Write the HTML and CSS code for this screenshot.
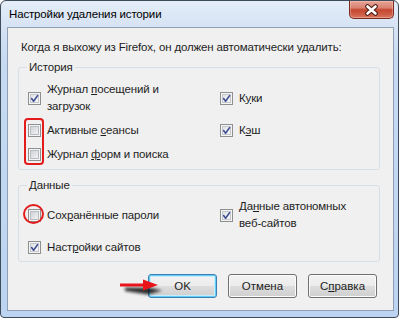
FILE: index.html
```html
<!DOCTYPE html>
<html lang="ru">
<head>
<meta charset="utf-8">
<title>Настройки удаления истории</title>
<link rel="stylesheet" href="styles.css">
</head>
<body>
<div class="window">
  <div class="titlebar">
    <span class="title">Настройки удаления истории</span>
    <button class="close" type="button" aria-label="Закрыть">
      <svg width="15" height="12" viewBox="0 0 15 12"><path d="M3.5 2.5 L11.5 9.5 M11.5 2.5 L3.5 9.5" stroke="#4a1a12" stroke-width="4.6" stroke-linecap="round"/><path d="M3.5 2.5 L11.5 9.5 M11.5 2.5 L3.5 9.5" stroke="#fff" stroke-width="2.6" stroke-linecap="round"/></svg>
    </button>
  </div>
  <div class="client">
    <p class="intro">Когда я выхожу из Firefox, он должен автоматически удалить:</p>

    <fieldset class="group g1">
      <legend>История</legend>
      <div class="grid">
        <label class="opt"><span class="cb on"><svg viewBox="0 0 11 11"><path d="M2.6 5.6 L4.6 8.2 L8.6 2.6"/></svg></span><span>Журнал <u>п</u>осещений и<br>загрузок</span></label>
        <label class="opt"><span class="cb on"><svg viewBox="0 0 11 11"><path d="M2.6 5.6 L4.6 8.2 L8.6 2.6"/></svg></span><span>К<u>у</u>ки</span></label>
        <label class="opt"><span class="cb"></span><span>Активные <u>с</u>еансы</span></label>
        <label class="opt"><span class="cb on"><svg viewBox="0 0 11 11"><path d="M2.6 5.6 L4.6 8.2 L8.6 2.6"/></svg></span><span>К<u>э</u>ш</span></label>
        <label class="opt"><span class="cb"></span><span>Журнал <u>ф</u>орм и поиска</span></label>
      </div>
    </fieldset>

    <fieldset class="group g2">
      <legend>Данные</legend>
      <div class="grid">
        <label class="opt"><span class="cb"></span><span>Сох<u>р</u>анённые пароли</span></label>
        <label class="opt"><span class="cb on"><svg viewBox="0 0 11 11"><path d="M2.6 5.6 L4.6 8.2 L8.6 2.6"/></svg></span><span>Да<u>н</u>ные автономных<br>веб-сайтов</span></label>
        <label class="opt"><span class="cb on"><svg viewBox="0 0 11 11"><path d="M2.6 5.6 L4.6 8.2 L8.6 2.6"/></svg></span><span>Наст<u>р</u>ойки сайтов</span></label>
      </div>
    </fieldset>

    <div class="buttons">
      <button class="btn default" type="button">OK</button>
      <button class="btn" type="button">Отмена</button>
      <button class="btn" type="button">С<u>п</u>равка</button>
    </div>

    <div class="mark-rect"></div>
    <div class="mark-circle"></div>
    <svg class="arrow" width="50" height="22" viewBox="0 0 50 22">
      <defs><filter id="blur" x="-20%" y="-50%" width="140%" height="200%"><feGaussianBlur stdDeviation="1.6"/></filter></defs>
      <path d="M7 12.5 L30 12.5 L44 15.5 L30 19.5 L7 16 Z" fill="#111" opacity="0.85" filter="url(#blur)"/>
      <rect x="2" y="8.5" width="25" height="3" fill="#e8141a"/>
      <path d="M25 4.5 L40 10 L25 15.5 Z" fill="#e8141a"/>
    </svg>
  </div>
</div>
</body>
</html>
```
FILE: styles.css
```css
html, body {
  margin: 0;
  padding: 0;
  background: #ffffff;
}

body {
  font-family: "Liberation Sans", Arial, sans-serif;
  font-size: 11.5px;
  letter-spacing: -0.15px;
  color: #1e1e1e;
}

.window {
  width: 399px;
  height: 318px;
  box-sizing: border-box;
  border: 1px solid #3d4b5a;
  border-radius: 6px 6px 4px 4px;
  background: linear-gradient(to bottom, #e4edf7 0, #d6e3f4 26px, #c6daf2 60px, #bcd4f1 100%);
  padding: 0 4px 6px 6px;
  display: flex;
  flex-direction: column;
}

.titlebar {
  height: 26px;
  flex: none;
  display: flex;
  justify-content: space-between;
  align-items: center;
}

.title {
  margin-left: 2px;
  line-height: 15px;
  color: #000;
}

.close {
  align-self: flex-start;
  width: 45px;
  height: 18px;
  margin: 0;
  padding: 0;
  border: 1px solid #7a2a1f;
  border-top: none;
  border-radius: 0 0 5px 5px;
  background: linear-gradient(to bottom, #e6a597 0, #d98271 40%, #c5462f 52%, #cf5e46 80%, #db7a62 100%);
  box-shadow: inset 0 0 0 1px rgba(255, 220, 210, 0.35);
  display: flex;
  align-items: center;
  justify-content: center;
}

.close svg {
  display: block;
}

.client {
  flex: 1;
  position: relative;
  border: 1px solid #8fa0b4;
  background: #f0f0f0;
  padding: 12px 13px 0 10px;
  display: flex;
  flex-direction: column;
}

.intro {
  margin: 0 0 5px 3px;
  line-height: 15px;
  white-space: nowrap;
}

.group {
  margin: 0;
  border: 1px solid #d5dfe5;
  border-radius: 3px;
  padding: 6px 9px 6px 9px;
  min-width: 0;
}

.group legend {
  padding: 0 2px;
  margin-left: -1px;
  line-height: 15px;
}

.g2 {
  margin-top: 8px;
  padding-top: 5px;
  padding-bottom: 5px;
}

.grid {
  display: grid;
  grid-template-columns: 192px 1fr;
  row-gap: 7px;
  align-items: center;
}

.opt {
  display: flex;
  align-items: center;
  gap: 6px;
  line-height: 17px;
}

.cb {
  flex: none;
  width: 13px;
  height: 13px;
  box-sizing: border-box;
  border: 1px solid #8e8f8f;
  background: #f4f4f4;
  display: grid;
  place-items: center;
}

.cb::before {
  content: "";
  grid-area: 1 / 1;
  width: 9px;
  height: 9px;
  box-sizing: border-box;
  border: 1px solid #b9bdc2;
  background: linear-gradient(135deg, #cfd2d7, #f1f2f3);
}

.cb.on::before {
  border-color: #c5c9ce;
  background: linear-gradient(135deg, #dfe2e6, #f7f7f7);
}

.cb svg {
  grid-area: 1 / 1;
  width: 11px;
  height: 11px;
  display: block;
  fill: none;
  stroke: #3f4e92;
  stroke-width: 1.6;
  stroke-linecap: round;
  stroke-linejoin: round;
}

.buttons {
  margin-top: 12px;
  padding-right: 3px;
  display: flex;
  justify-content: flex-end;
  gap: 11px;
}

.btn {
  width: 69px;
  height: 24px;
  margin: 0;
  padding: 0;
  border: 1px solid #707070;
  border-radius: 3px;
  background: linear-gradient(to bottom, #f3f3f3 0, #ebebeb 50%, #dddddd 50%, #cfcfcf 100%);
  box-shadow: inset 0 0 0 1px #fbfbfb;
  font: inherit;
  color: #1e1e1e;
  line-height: 15px;
}

.btn.default {
  border-color: #3c7fb1;
  box-shadow: inset 0 0 0 1px #62cdf6, inset 0 0 0 2px #c7ecfb;
}

.mark-rect {
  position: absolute;
  left: 16px;
  top: 90px;
  width: 20px;
  height: 47px;
  box-sizing: border-box;
  border: 2px solid #e31b1b;
  border-radius: 4px;
}

.mark-circle {
  position: absolute;
  left: 15px;
  top: 176px;
  width: 21px;
  height: 20px;
  box-sizing: border-box;
  border: 2px solid #e31b1b;
  border-radius: 50%;
}

.arrow {
  position: absolute;
  left: 110px;
  top: 247px;
  display: block;
}
```
